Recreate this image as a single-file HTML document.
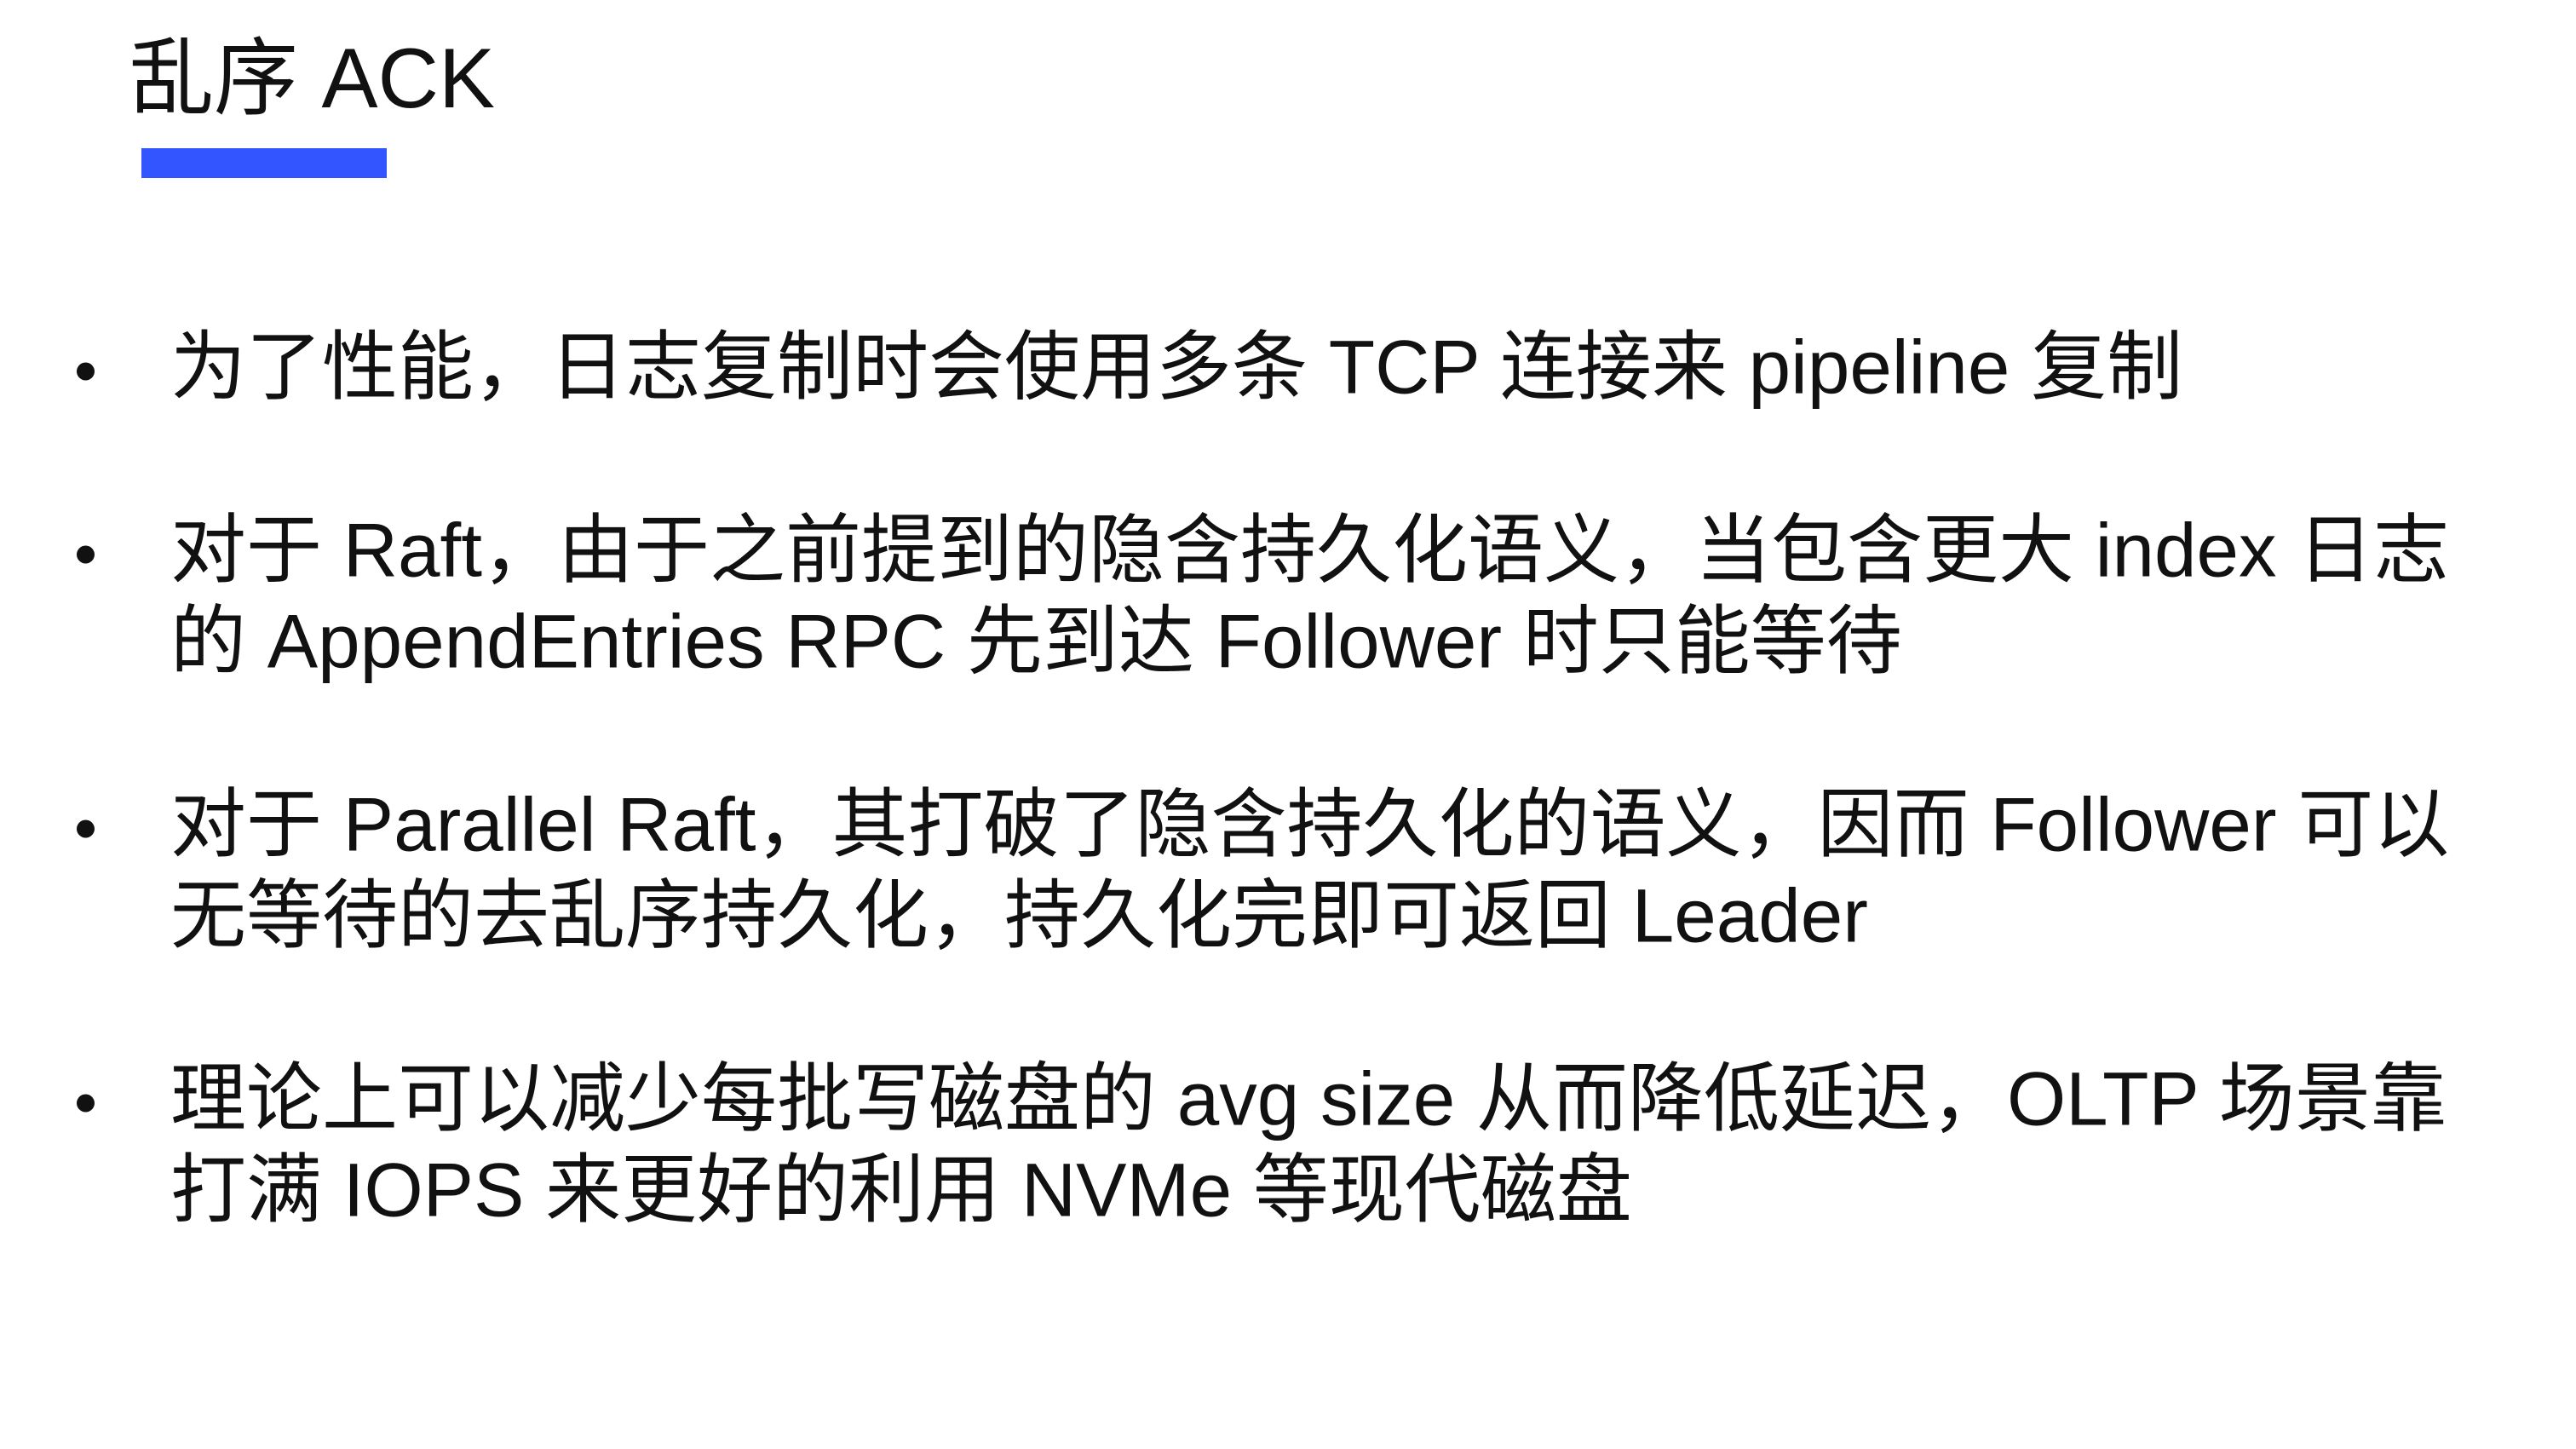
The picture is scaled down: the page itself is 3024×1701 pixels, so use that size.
<!DOCTYPE html>
<html><head><meta charset="utf-8"><style>
html,body{margin:0;padding:0;background:#fff;}
body{width:3024px;height:1701px;position:relative;overflow:hidden;font-family:"Liberation Sans","Noto Sans CJK SC",sans-serif;color:#111;}
.t{position:absolute;left:152px;top:30px;font-size:99px;line-height:124px;white-space:nowrap;}
.bar{position:absolute;left:166px;top:174px;width:288px;height:35px;background:#3355ff;}
.l{position:absolute;left:200px;font-size:89px;line-height:107px;white-space:nowrap;transform:translateY(-50%);}
.d{position:absolute;left:90px;width:21px;height:21px;border-radius:50%;background:#111;transform:translateY(-50%);}
</style></head><body>
<div class="t">乱序 ACK</div>
<div class="bar"></div>
<div class="d" style="top:436px"></div>
<div class="l" style="top:431px">为了性能，日志复制时会使用多条 TCP 连接来 pipeline 复制</div>
<div class="d" style="top:651px"></div>
<div class="l" style="top:646px">对于 Raft，由于之前提到的隐含持久化语义，当包含更大 index 日志</div>
<div class="l" style="top:753px">的 AppendEntries RPC 先到达 Follower 时只能等待</div>
<div class="d" style="top:973px"></div>
<div class="l" style="top:968px">对于 Parallel Raft，其打破了隐含持久化的语义，因而 Follower 可以</div>
<div class="l" style="top:1075px">无等待的去乱序持久化，持久化完即可返回 Leader</div>
<div class="d" style="top:1295px"></div>
<div class="l" style="top:1290px">理论上可以减少每批写磁盘的 avg size 从而降低延迟，OLTP 场景靠</div>
<div class="l" style="top:1397px">打满 IOPS 来更好的利用 NVMe 等现代磁盘</div>
</body></html>
